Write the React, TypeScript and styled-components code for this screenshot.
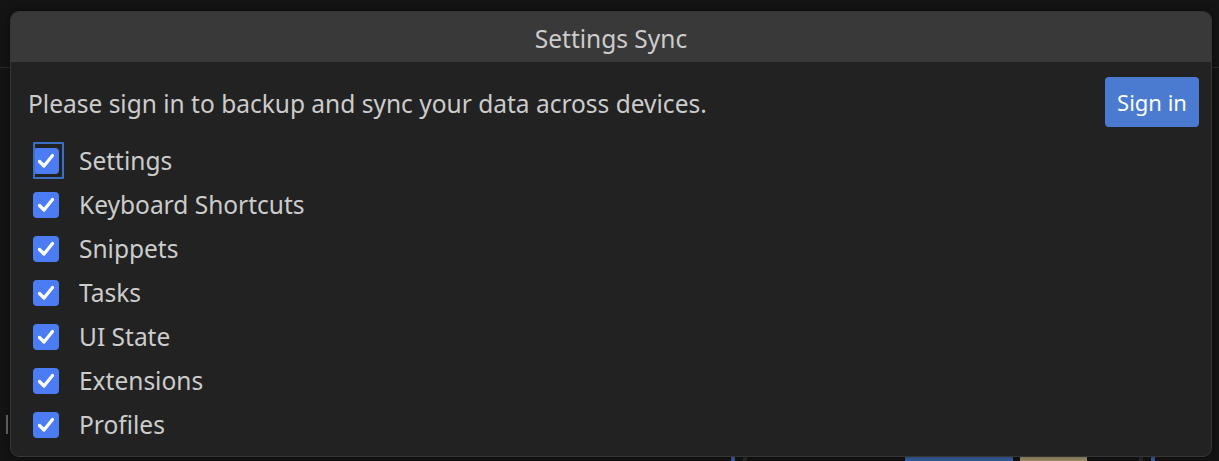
import React from "react";
import styled, { createGlobalStyle } from "styled-components";

const Global = createGlobalStyle`
  html, body { margin: 0; padding: 0; background: #141414; }
  body { width: 1219px; height: 461px; overflow: hidden; font-family: "Noto Sans", "Open Sans", sans-serif; }
`;

const Page = styled.div`
  position: relative;
  width: 1219px;
  height: 461px;
  background: #141414;
  display: flex;
  flex-direction: column;
  overflow: hidden;
`;

const TopStrip = styled.div`
  height: 68px;
  flex: none;
  border-bottom: 1px solid #2b2b2b;
  box-sizing: border-box;
`;

const Middle = styled.div`
  flex: 1;
  display: flex;
  align-items: flex-end;
  padding: 0 0 23px 6px;
`;

const Glyph = styled.div`
  width: 2px;
  height: 19px;
  background: #6a6a6a;
`;

const BottomStrip = styled.div`
  height: 4px;
  flex: none;
  display: flex;
  padding-left: 731px;
`;

const Chip = styled.div<{ $w: number; $c: string; $ml: number }>`
  width: ${(p) => p.$w}px;
  margin-left: ${(p) => p.$ml}px;
  background: ${(p) => p.$c};
  height: 100%;
`;

const Dialog = styled.div`
  position: absolute;
  left: 10px;
  top: 11px;
  width: 1202px;
  height: 446px;
  box-sizing: border-box;
  border: 1px solid #353535;
  border-radius: 9px;
  background: #222222;
  overflow: hidden;
  display: flex;
  flex-direction: column;
  box-shadow: 0 0 8px rgba(0, 0, 0, 0.5);
`;

const TitleBar = styled.div`
  height: 50px;
  flex: none;
  background: #393939;
  display: flex;
  align-items: center;
  justify-content: center;
  color: #cccccc;
  font-size: 24.5px;
  padding-top: 2px;
  box-sizing: border-box;
`;

const Body = styled.div`
  flex: 1;
  display: flex;
  flex-direction: column;
  padding: 15px 12px 10px 17px;
`;

const MessageRow = styled.div`
  display: flex;
  align-items: center;
  justify-content: space-between;
  height: 50px;
  margin-bottom: 12px;
`;

const Message = styled.div`
  color: #cccccc;
  font-size: 24.5px;
  padding-top: 2px;
`;

const SignIn = styled.button`
  width: 94px;
  height: 50px;
  border: none;
  border-radius: 4px;
  background: #4a7bd1;
  color: #ffffff;
  font-family: inherit;
  font-size: 22px;
  padding: 0 0 1px 0;
  cursor: pointer;
`;

const List = styled.div`
  display: flex;
  flex-direction: column;
`;

const Row = styled.label`
  height: 44px;
  display: flex;
  align-items: center;
  padding-left: 5px;
`;

const Box = styled.span<{ $focused?: boolean }>`
  position: relative;
  width: 26px;
  height: 26px;
  border-radius: 4px;
  background: #4c7cf3;
  display: flex;
  align-items: center;
  justify-content: center;
  flex: none;
  ${(p) =>
    p.$focused
      ? `&::after {
    content: "";
    position: absolute;
    left: 0;
    top: -6px;
    width: 31px;
    height: 37px;
    border: 2px solid #3b6fc4;
    border-radius: 1px;
    box-sizing: border-box;
  }`
      : ""}
`;

const Label = styled.span`
  margin-left: 20px;
  color: #cccccc;
  font-size: 24.5px;
  padding-bottom: 1px;
`;

const Check = () => (
  <svg width="20" height="20" viewBox="0 0 20 20">
    <polyline
      points="3.5,10.5 8,15 16.5,4.5"
      fill="none"
      stroke="#ffffff"
      strokeWidth="3.2"
      strokeLinecap="round"
      strokeLinejoin="round"
    />
  </svg>
);

const items = [
  "Settings",
  "Keyboard Shortcuts",
  "Snippets",
  "Tasks",
  "UI State",
  "Extensions",
  "Profiles",
];

export default function App() {
  return (
    <>
      <Global />
      <Page>
        <TopStrip />
        <Middle>
          <Glyph />
        </Middle>
        <BottomStrip>
          <Chip $w={4} $ml={0} $c="#3a62a8" />
          <Chip $w={4} $ml={8} $c="#2a2a2a" />
          <Chip $w={108} $ml={158} $c="#3a62a8" />
          <Chip $w={67} $ml={7} $c="#a89870" />
          <Chip $w={4} $ml={52} $c="#2a2a2a" />
          <Chip $w={4} $ml={8} $c="#3a62a8" />
        </BottomStrip>
        <Dialog>
          <TitleBar>Settings Sync</TitleBar>
          <Body>
            <MessageRow>
              <Message>Please sign in to backup and sync your data across devices.</Message>
              <SignIn>Sign in</SignIn>
            </MessageRow>
            <List>
              {items.map((it, i) => (
                <Row key={it}>
                  <Box $focused={i === 0}>
                    <Check />
                  </Box>
                  <Label>{it}</Label>
                </Row>
              ))}
            </List>
          </Body>
        </Dialog>
      </Page>
    </>
  );
}
